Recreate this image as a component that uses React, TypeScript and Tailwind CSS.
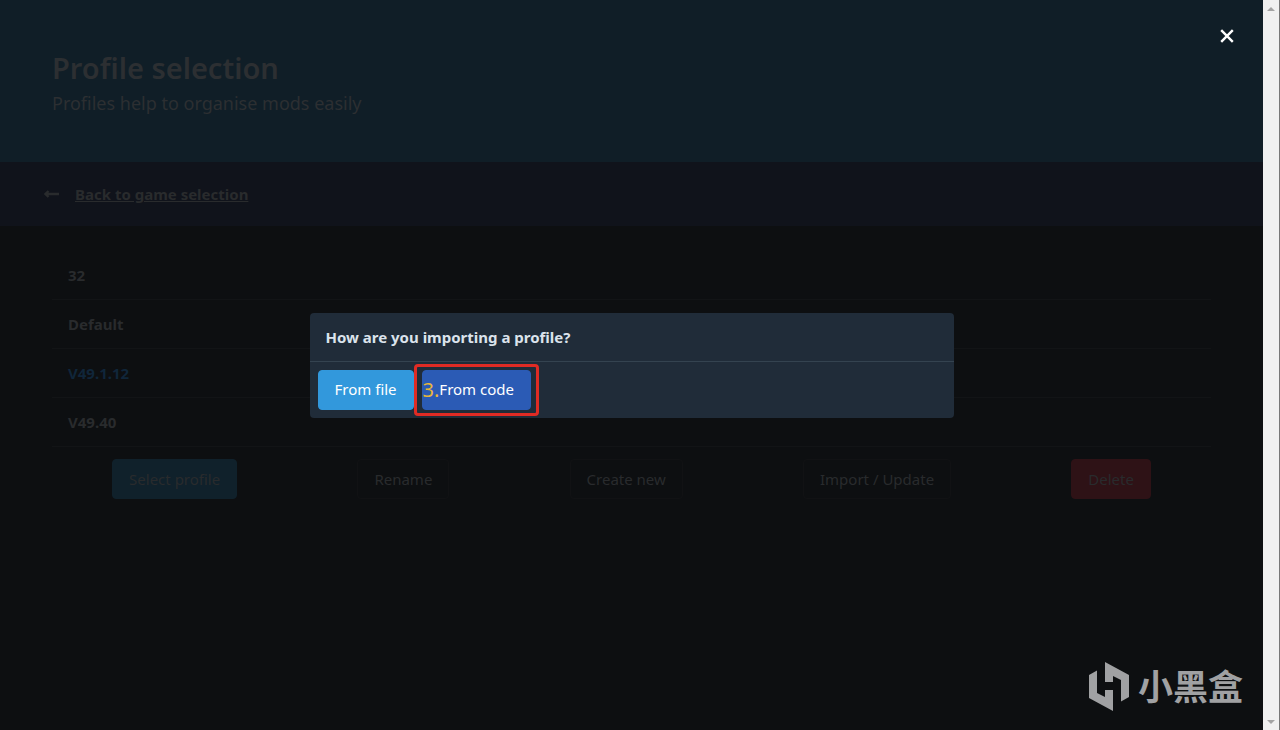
import React from 'react';

const profiles = ['32', 'Default', 'V49.1.12', 'V49.40'];
const selectedProfile = 'V49.1.12';

const actions = [
    { label: 'Select profile', style: 'bg-[#10212b] border-[#10212b]' },
    { label: 'Rename', style: 'border-[#111214]' },
    { label: 'Create new', style: 'border-[#111214]' },
    { label: 'Import / Update', style: 'border-[#111214]' },
    { label: 'Delete', style: 'bg-[#2e1216] border-[#2e1216]' },
];

const Header = () => (
    <header className="bg-[#101e27] px-[52px] pt-12 pb-11 text-[#2c2f32]">
        <h1 className="text-[29px] leading-10 font-semibold">Profile selection</h1>
        <p className="text-lg leading-[30px]">Profiles help to organise mods easily</p>
    </header>
);

const BackBar = () => (
    <nav className="bg-[#10131b] px-11 py-5">
        <a href="#games" className="flex w-fit items-center gap-4 leading-6 font-bold text-[#292b2d]">
            <svg width="15" height="24" viewBox="0 0 15 24" fill="none" stroke="currentColor" strokeWidth="2.4">
                <path d="M1 12h14M4.5 9L1.5 12L4.5 15" />
            </svg>
            <span className="underline">Back to game selection</span>
        </a>
    </nav>
);

const ImportModal = () => (
    <div className="absolute inset-0 flex items-center justify-center">
        <div role="dialog" aria-labelledby="import-title" className="w-[644px] max-w-full rounded bg-[#202c39]">
            <h2 id="import-title" className="border-b border-[#344350] px-4 py-3 leading-6 font-bold text-[#dbe3ec]">
                How are you importing a profile?
            </h2>
            <div className="flex gap-2 p-2 text-white">
                <button className="h-10 rounded border border-[#3298dc] bg-[#3298dc] px-4">From file</button>
                <div className="relative">
                    <button className="flex h-10 items-center rounded border border-[#2b5bb5] bg-[#2b5bb5] pr-4">
                        <span className="text-xl text-[#e8b63a]">3.</span>
                        From code
                    </button>
                    <div className="pointer-events-none absolute -inset-x-2 -inset-y-[6px] rounded-sm border-3 border-[#e02b24]" />
                </div>
            </div>
        </div>
        <button aria-label="Close" className="absolute top-5 right-5 flex h-8 w-8 items-center justify-center text-white">
            <svg width="14" height="14" viewBox="0 0 14 14" stroke="currentColor" strokeWidth="2.4">
                <path d="M1.2 1.2L12.8 12.8M12.8 1.2L1.2 12.8" />
            </svg>
        </button>
    </div>
);

const Watermark = () => (
    <div className="absolute right-5 bottom-[18px] flex items-center gap-2 text-[#a0a1a3]">
        <svg width="42" height="50" viewBox="0 0 42 50" fill="currentColor">
            <path d="M1 13L9 8.5V31L17 35V28H25V49L1 36Z" />
            <path d="M17 0L41 13V35L33 39.5V18L25 14V20H17Z" />
        </svg>
        <span className="text-[35px] leading-[50px] font-bold">小黑盒</span>
    </div>
);

const Scrollbar = () => (
    <div aria-hidden="true" className="flex w-[17px] shrink-0 flex-col items-center justify-between border-r border-[#777777] bg-[#f0f0f0] pt-[7px] pb-[6px]">
        <svg width="8" height="4" fill="#a3a3a3"><path d="M0 4L4 0L8 4Z" /></svg>
        <svg width="8" height="4" fill="#a3a3a3"><path d="M0 0L4 4L8 0Z" /></svg>
    </div>
);

export default function App() {
    return (
        <div className="flex min-h-screen bg-[#0d0f11] font-['Noto_Sans','Noto_Sans_CJK_SC',sans-serif] text-[15px]">
            <div className="relative flex-1">
                <Header />
                <BackBar />
                <main className="px-[52px] pt-[25px] text-[#292b2d]">
                    <ul>
                        {profiles.map((name) => (
                            <li key={name} className="border-b border-[#121416] px-4 py-3">
                                <a href="#profile" className={`block leading-6 font-bold ${name === selectedProfile ? 'text-[#10263a]' : ''}`}>
                                    {name}
                                </a>
                            </li>
                        ))}
                    </ul>
                    <div className="flex justify-around pt-3">
                        {actions.map(({ label, style }) => (
                            <button key={label} className={`h-10 rounded border px-4 ${style}`}>{label}</button>
                        ))}
                    </div>
                </main>
                <ImportModal />
                <Watermark />
            </div>
            <Scrollbar />
        </div>
    );
}
